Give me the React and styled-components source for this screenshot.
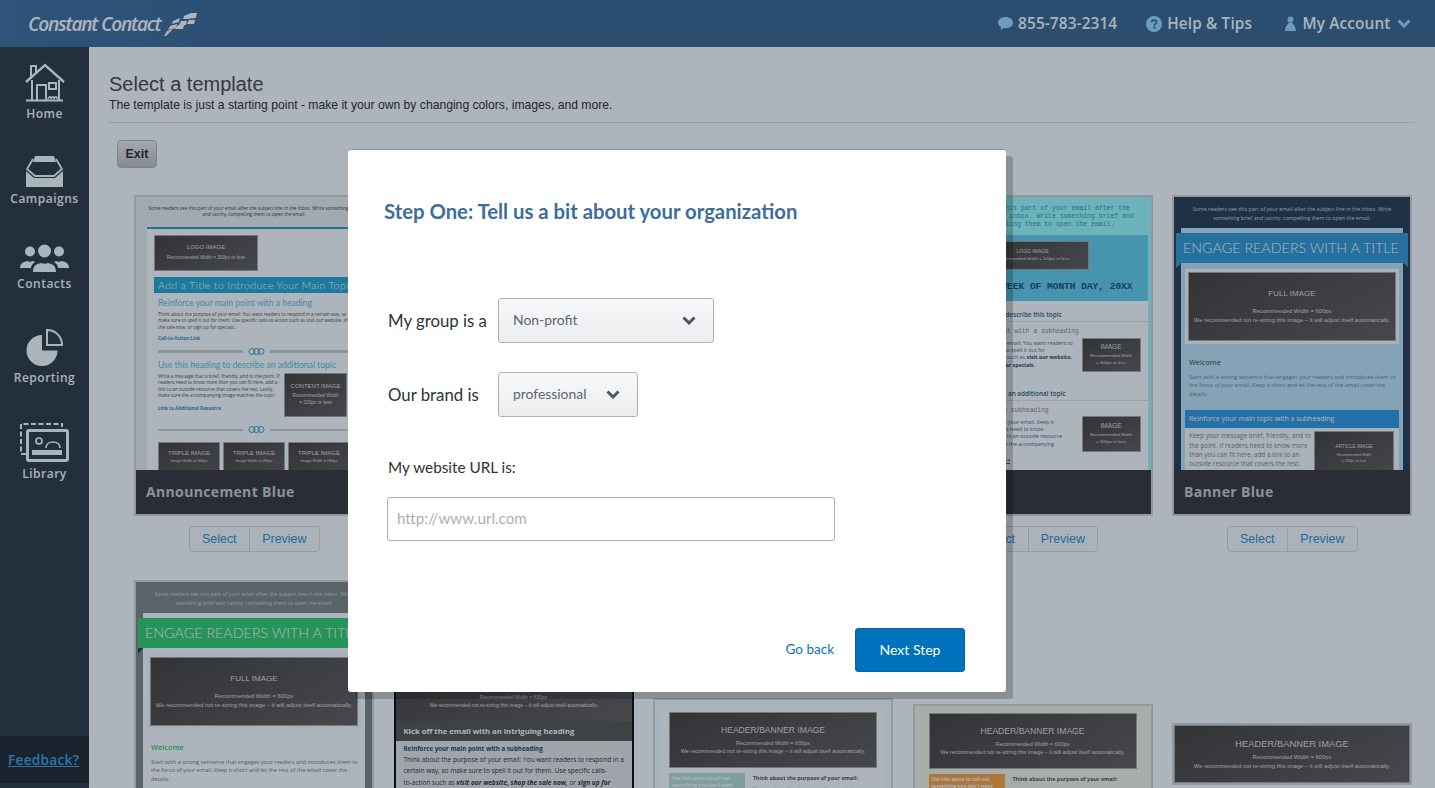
import React from 'react';
import styled, { createGlobalStyle } from 'styled-components';

/* The colours below are read from the dimmed picture; dim() returns the colour that, under the modal's backdrop, gives that reading. */
const dim = (hex) => {
  const n = parseInt(hex.slice(1), 16);
  const c = [(n >> 16) & 255, (n >> 8) & 255, n & 255];
  const back = [20, 40, 60];
  const v = c.map((x, i) => Math.max(0, Math.min(255, Math.round((x - back[i] * 0.35) / 0.65))));
  return `rgb(${v[0]},${v[1]},${v[2]})`;
};

const SANS = '"Open Sans", "Noto Sans", sans-serif';
const ARIAL = '"Liberation Sans", Arial, sans-serif';
const LATO = 'Lato, "Open Sans", sans-serif';
const MONO = '"Liberation Mono", monospace';

const Global = createGlobalStyle`
  html, body { margin: 0; padding: 0; height: 100%; overflow: hidden; background: #fff; }
  * { box-sizing: border-box; }
`;

const Page = styled.div`
  position: relative;
  width: 1435px;
  height: 788px;
  overflow: hidden;
  display: flex;
  flex-direction: column;
  font-family: ${ARIAL};
`;

const Header = styled.header`
  flex: 0 0 47px;
  display: flex;
  align-items: center;
  justify-content: space-between;
  padding: 0 24px 0 28px;
  background: linear-gradient(90deg, ${dim('#2f5379')}, ${dim('#2b4d70')} 30%);
`;
const Logo = styled.div`
  display: flex;
  align-items: center;
  gap: 2px;
  color: ${dim('#b4bdc4')};
  font: italic 600 19.2px/1 ${SANS};
  letter-spacing: -1.25px;
`;
const TopLinks = styled.nav`
  display: flex;
  align-items: center;
`;
const TopLink = styled.a`
  display: flex;
  align-items: center;
  gap: ${(p) => p.$gap}px;
  margin-left: ${(p) => p.$left}px;
  color: ${dim('#aab8c4')};
  font: 600 15.3px/1 ${SANS};
  letter-spacing: 0.15px;
`;

const Body = styled.div`
  flex: 1;
  display: flex;
  min-height: 0;
`;
const Side = styled.aside`
  flex: 0 0 89px;
  display: flex;
  flex-direction: column;
  background: ${dim('#24303c')};
`;
const NavItem = styled.a`
  height: ${(p) => p.$h}px;
  display: flex;
  flex-direction: column;
  align-items: center;
  justify-content: flex-end;
  gap: 5px;
  color: ${dim('#a7b1ba')};
  font: 600 12px/14px ${SANS};
  letter-spacing: 0.5px;
`;
const Feedback = styled.div`
  margin-top: auto;
  margin-bottom: 5px;
  height: 47px;
  display: flex;
  align-items: center;
  padding-left: 8px;
  background: ${dim('#19242f')};
  a {
    color: ${dim('#2a77ad')};
    font: 600 13.6px/1 ${SANS};
    letter-spacing: 0.3px;
    text-decoration: underline;
  }
`;

const Main = styled.main`
  flex: 1;
  min-width: 0;
  padding: 25px 20px 0;
  background: ${dim('#adb4bb')};
`;
const Title = styled.h1`
  margin: 0;
  font: 400 20px/24px ${ARIAL};
  color: ${dim('#37393c')};
`;
const Sub = styled.p`
  margin: 1px 0 0;
  font: 400 12.17px/16px ${ARIAL};
  color: ${dim('#24272a')};
`;
const Rule = styled.hr`
  margin: 9px 0 0;
  border: 0;
  border-top: 1px solid ${dim('#999ea3')};
`;
const ExitBtn = styled.button`
  display: block;
  margin: 17px 0 0 8px;
  width: 40px;
  height: 28px;
  padding: 0;
  border: 1px solid ${dim('#7f848a')};
  border-radius: 4px;
  background: linear-gradient(${dim('#a3a8ae')}, ${dim('#868b91')});
  color: ${dim('#24272a')};
  font: 700 12.5px/1 ${ARIAL};
`;
const Gallery = styled.div`
  display: flex;
  gap: 19.5px;
  margin: 27px 0 0 25px;
`;
const Column = styled.div`
  flex: 0 0 240px;
  width: 240px;
`;
const Card = styled.article`
  border: 2px solid ${(p) => p.$border || dim('#94999e')};
  margin-top: ${(p) => p.$top || 0}px;
  display: flex;
  flex-direction: column;
  height: ${(p) => (p.$tall ? 'auto' : '321px')};
`;
const Preview = styled.div`
  flex: 1;
  min-height: 0;
  overflow: hidden;
  background: ${(p) => p.$bg};
`;
const Caption = styled.div`
  flex: 0 0 44px;
  display: flex;
  align-items: center;
  padding-left: 10px;
  background: ${dim('#2a2e36')};
  color: ${dim('#8d9299')};
  font: 700 14px/1 ${SANS};
  letter-spacing: 0.35px;
`;
const BtnGroup = styled.div`
  display: flex;
  width: 131px;
  height: 26px;
  margin: 10px auto 0;
  border: 1px solid ${dim('#949ca3')};
  border-radius: 4px;
  background: ${dim('#abb2b9')};
`;
const GroupBtn = styled.a`
  flex: ${(p) => p.$w} 0 0;
  display: flex;
  align-items: center;
  justify-content: center;
  color: ${dim('#1f6b9f')};
  font: 400 12.4px/1 ${ARIAL};
  & + & { border-left: 1px solid ${dim('#949ca3')}; }
`;

/* image placeholders used inside the template previews */
const Shot = styled.div`
  flex: 0 0 auto;
  width: ${(p) => (p.$w ? `${p.$w}px` : 'auto')};
  height: ${(p) => p.$h}px;
  display: flex;
  flex-direction: column;
  align-items: center;
  justify-content: ${(p) => p.$justify || 'center'};
  padding: ${(p) => p.$pt || 0}px 0 ${(p) => p.$pb || 0}px;
  text-align: center;
  background: linear-gradient(150deg, ${dim('#333436')}, ${dim('#46484c')});
  outline: ${(p) => (p.$plain ? '0' : `1px solid ${dim('#74787d')}`)};
  outline-offset: -1px;
  color: ${dim('#9a9fa4')};
  font-family: ${ARIAL};
`;
const ShotTitle = styled.div`
  font-size: ${(p) => p.$s}px;
  line-height: 1.2;
  margin-bottom: ${(p) => p.$mb || 0}px;
  white-space: nowrap;
`;
const ShotNote = styled.div`
  font-size: ${(p) => p.$s}px;
  line-height: ${(p) => p.$lh || 1.5};
  white-space: nowrap;
`;

const Pre = styled.div`
  padding-top: 8px;
  text-align: center;
  color: ${(p) => p.$c};
  font: 400 ${(p) => p.$s}px/${(p) => p.$lh}px ${SANS};
  white-space: nowrap;
`;

/* Announcement */
const AnnPanel = styled.div`
  margin: 9px 0 0 11px;
  width: 214px;
  border-top: 2px solid ${dim('#1f7396')};
  padding: 6px 7px;
  background: ${dim('#adb4bb')};
`;
const AnnTitle = styled.div`
  margin-top: 6px;
  height: 16px;
  overflow: hidden;
  background: ${dim('#1c7a9e')};
  color: ${dim('#b5c4cf')};
  font: 300 10.6px/16px ${LATO};
  letter-spacing: 0.33px;
  padding-left: 4px;
  white-space: nowrap;
`;
const AnnHeading = styled.div`
  margin: ${(p) => p.$mt}px 0 0 4px;
  color: ${dim('#3d8aa8')};
  font: 400 8.6px/12px ${LATO};
  white-space: nowrap;
`;
const AnnText = styled.p`
  margin: ${(p) => p.$mt}px 0 0 4px;
  color: ${dim('#3a3f44')};
  font: 400 4.6px/6.5px ${SANS};
  white-space: nowrap;
`;
const AnnLink = styled.a`
  display: block;
  margin: ${(p) => p.$mt}px 0 0 4px;
  color: ${dim('#1f6b8f')};
  font: 700 4.6px/6.5px ${SANS};
`;
const Divider = styled.div`
  margin: ${(p) => p.$mt}px 0 0 4px;
  height: 6px;
  display: flex;
  align-items: center;
  gap: 5px;
  &::before, &::after {
    content: '';
    flex: 1;
    height: ${(p) => p.$bar}px;
    background: ${dim('#8f9499')};
  }
`;
const AnnRow = styled.div`
  display: flex;
  justify-content: space-between;
  margin-top: 2px;
  margin-right: 7px;
  height: 46px;
`;
const Triple = styled.div`
  display: flex;
  gap: 3px;
  margin: 9px 0 0 4px;
`;

/* Banner (ribbon) */
const RibbonPanel = styled.div`
  margin: 6px 7px 0;
  padding-top: 5px;
  min-height: 260px;
  background: ${(p) => p.$bg};
`;
const Ribbon = styled.div`
  position: relative;
  margin: 0 -5px;
  height: 30px;
  padding-left: 7px;
  overflow: visible;
  background: ${(p) => p.$c};
  color: ${dim('#b4c6d3')};
  font: 300 14.3px/30px ${LATO};
  white-space: nowrap;
  &::before, &::after {
    content: '';
    position: absolute;
    top: 100%;
    width: 5px;
    height: 5px;
    background: linear-gradient(to top right, transparent 50%, ${(p) => p.$fold} 50%);
  }
  &::before { left: 0; transform: scaleX(-1) ; }
  &::after { right: 0; }
`;
const Frame = styled.div`
  margin: 6px 4px 0;
  border: 3px solid ${dim('#a9b1b9')};
  display: flex;
  flex-direction: column;
`;
const Welcome = styled.div`
  margin: 13px 0 0 8px;
  color: ${(p) => p.$c};
  font: ${(p) => (p.$bold ? 600 : 400)} 7.4px/10px ${SANS};
`;
const RibbonText = styled.p`
  margin: 6px 0 0 8px;
  color: ${(p) => p.$c};
  font: 400 5.64px/8.2px ${SANS};
  white-space: nowrap;
`;
const SubBar = styled.div`
  margin: 12.4px 4px 0;
  height: 18px;
  padding-left: 4px;
  background: ${dim('#2470a8')};
  color: ${dim('#aac3d4')};
  font: 400 7px/18px ${SANS};
  white-space: nowrap;
`;
const LowerBox = styled.div`
  margin: 0 4px;
  padding: 3px 5px 0 4px;
  height: 60px;
  display: flex;
  justify-content: space-between;
  background: ${dim('#a9b2bb')};
`;
const LowerText = styled.p`
  margin: 0;
  color: ${dim('#595f66')};
  font: 400 6.4px/9.4px ${SANS};
  white-space: nowrap;
`;

/* Week of — mono newsletter */
const WeekPre = styled.div`
  padding-top: 8px;
  text-align: center;
  color: ${dim('#2c6f80')};
  font: 400 6.5px/8px ${MONO};
  white-space: nowrap;
`;
const WeekInner = styled.div`
  margin: 6px 3px 0;
  height: 240px;
  background: ${dim('#adb4bb')};
`;
const WeekHead = styled.div`
  height: 66px;
  padding-top: 6px;
  background: ${dim('#4794ad')};
  display: flex;
  flex-direction: column;
  align-items: center;
`;
const WeekDate = styled.div`
  align-self: flex-end;
  margin: 11px 15px 0 0;
  color: ${dim('#153f5c')};
  font: 700 9.5px/12px ${MONO};
  white-space: nowrap;
`;
const WeekSection = styled.section`
  padding: ${(p) => p.$pt}px 7px 0 8px;
`;
const WeekHeading = styled.div`
  margin: 0 -7px 0 -8px;
  padding: 0 0 2px 27px;
  border-bottom: 1px solid ${dim('#9ba2a9')};
  color: ${dim('#1f4a63')};
  font: 600 6.4px/9px ${SANS};
  white-space: nowrap;
`;
const WeekSub = styled.div`
  margin: 6px 0 0 21px;
  color: ${dim('#5f666d')};
  font: 400 6.3px/8px ${MONO};
  white-space: nowrap;
`;
const WeekRow = styled.div`
  display: flex;
  justify-content: space-between;
  margin-top: ${(p) => p.$mt}px;
  height: ${(p) => p.$h}px;
`;
const WeekText = styled.p`
  margin: ${(p) => p.$mt}px 0 0;
  color: ${dim('#33506a')};
  font: 400 5.3px/7.2px ${SANS};
  white-space: nowrap;
  b { font-weight: 700; color: ${dim('#1b3a52')}; }
`;
const WeekLink = styled.a`
  display: block;
  margin-top: 5px;
  color: ${dim('#33506a')};
  font: 400 5.3px/7.2px ${SANS};
  text-decoration: underline;
  white-space: nowrap;
`;

/* Header-banner layouts on the second row */
const HeadPanel = styled.div`
  margin: ${(p) => p.$mt}px ${(p) => p.$mx}px 0;
  padding: ${(p) => p.$pt}px 8px 0;
  background: ${(p) => p.$bg};
  min-height: 100px;
`;
const HeadCols = styled.div`
  display: flex;
  gap: 8px;
  margin-top: 5px;
`;
const CallOut = styled.div`
  flex: 0 0 76px;
  height: 40px;
  padding: 2px 3px;
  background: ${(p) => p.$bg};
  color: ${dim('#c3cbd0')};
  font: 700 4.7px/6.5px ${SANS};
`;
const HeadCopy = styled.div`
  color: ${dim('#595f66')};
  font: 400 5.4px/11px ${SANS};
  white-space: nowrap;
  b { color: ${dim('#3b4046')}; font-weight: 700; }
`;

/* Dark mobile-style template */
const DarkBand = styled.div`
  height: 20px;
  padding-left: 8px;
  background: ${dim('#3f4245')};
  color: ${dim('#b6babf')};
  font: 700 7.7px/20px ${SANS};
  white-space: nowrap;
`;
const DarkBody = styled.div`
  padding: 2px 4px 0 8px;
  height: 70px;
  background: ${dim('#9fa5ab')};
  color: ${dim('#25282b')};
  font: 400 6.5px/11.3px ${SANS};
  white-space: nowrap;
  h4 { margin: 0; font: 700 6.2px/11px ${SANS}; color: ${dim('#14365c')}; }
  p { margin: 0; }
`;

/* Overlay + dialog */
const Backdrop = styled.div`
  position: absolute;
  inset: 0;
  background: rgba(20, 40, 60, 0.35);
`;
const Dialog = styled.section`
  position: absolute;
  left: 348px;
  top: 149px;
  width: 658px;
  height: 543px;
  display: flex;
  flex-direction: column;
  padding: 49px 41px 20px 36px;
  background: #fff;
  border-top: 1px solid #8b97a3;
  border-radius: 3px;
  box-shadow: 7px 7px 0 rgba(0, 0, 0, 0.2);
  font-family: ${LATO};
`;
const DialogTitle = styled.h2`
  margin: 0;
  color: #3d6d9b;
  font: 700 20.3px/24px ${LATO};
`;
const Field = styled.div`
  display: flex;
  align-items: center;
  margin: ${(p) => p.$mt}px 0 0 4px;
`;
const FieldLabel = styled.label`
  width: 110px;
  color: #2e3338;
  font: 400 16.8px/20px ${LATO};
`;
const Select = styled.div`
  width: ${(p) => p.$w}px;
  height: 45px;
  display: flex;
  align-items: center;
  justify-content: space-between;
  padding: 0 17px 1px 14px;
  border: 1px solid #adb1b5;
  border-radius: 3px;
  background: linear-gradient(#f7f8f9, #ebedef);
  color: #5d656d;
  font: 400 13.9px/1 ${LATO};
`;
const UrlLabel = styled.label`
  display: block;
  margin: 40px 0 0 4px;
  color: #2e3338;
  font: 400 15.3px/20px ${LATO};
`;
const UrlInput = styled.div`
  margin: 20px 0 0 3px;
  width: 448px;
  height: 44px;
  display: flex;
  align-items: center;
  padding-left: 9px;
  border: 1px solid #adb1b5;
  border-radius: 3px;
  color: #adb0b3;
  font: 400 15.2px/1 ${LATO};
`;
const DialogFoot = styled.footer`
  margin-top: auto;
  display: flex;
  align-items: center;
  justify-content: flex-end;
  gap: 21px;
`;
const GoBack = styled.a`
  color: #0b72bb;
  font: 400 13.5px/1 ${LATO};
`;
const NextBtn = styled.button`
  width: 110px;
  height: 44px;
  padding: 0;
  border: 1px solid #0865a8;
  border-radius: 3px;
  background: #0071bc;
  color: #fff;
  font: 400 14px/1 ${LATO};
`;

const iconC = dim('#a9b9c8');
const topC = dim('#6d9cb8');

const LogoMark = () => (
  <svg width="35" height="24" viewBox="0 0 35 24" fill={dim('#b4bdc4')}>
    <path d="M22 4l7-3h6l-1 5-9 1h-4zM11 9l7-3-1 4-7 2zM19 9h6l-1 4h-7zM27 8h6l-1 4h-7zM8 14l7-2-1 4-8 2zM16 13h6l-1 4-8 0zM5 19l6-2-7 7 -2 0z" />
  </svg>
);
const HomeIcon = () => (
  <svg width="40" height="39" viewBox="0 0 40 39" fill="none" stroke={iconC} strokeWidth="2">
    <path d="M1 19L20 2l19 17" strokeWidth="2.4" />
    <path d="M6 15v-12h5v7" />
    <path d="M7 17v20M34 17v20M1 37.5h37" />
    <path d="M12 37V22h9v15" />
    <rect x="24" y="20" width="7" height="6" />
    <path d="M23 36c1-3 3-3 3 0 1-3 3-3 3 0 1-3 3-3 3 0" strokeWidth="1.6" />
  </svg>
);
const TrayIcon = () => (
  <svg width="37" height="31" viewBox="0 0 37 31" fill={iconC} stroke="none">
    <path d="M9 0h19l2 6H7z" />
    <path d="M7 3L1 13l8 7h19l8-7L30 3" fill="none" stroke={iconC} strokeWidth="1.8" />
    <path d="M0 15l8 7h21l8-7v16H0z" />
  </svg>
);
const PeopleIcon = () => (
  <svg width="49" height="28" viewBox="0 0 49 28" fill={iconC}>
    <circle cx="10" cy="7.5" r="5" />
    <path d="M0 24c0-5 4-6 7-7 2 1 4 1 6 0l2 1c-3 2-4 4-4 6z" />
    <circle cx="39" cy="7.5" r="5" />
    <path d="M49 24c0-5-4-6-7-7-2 1-4 1-6 0l-2 1c3 2 4 4 4 6z" />
    <circle cx="24.5" cy="7" r="6.5" />
    <path d="M13 28c0-7 4-8 8-9 2 1 5 1 7 0 4 1 8 2 8 9z" />
  </svg>
);
const PieIcon = () => (
  <svg width="37" height="37" viewBox="0 0 37 37">
    <path d="M16 6a15.5 15.5 0 1 0 15.5 15.5H16z" fill={iconC} />
    <path d="M21 1c8 0 15 6 15 15H21z" fill="none" stroke={iconC} strokeWidth="2" />
  </svg>
);
const LibraryIcon = () => (
  <svg width="49" height="39" viewBox="0 0 49 39" fill="none" stroke={iconC}>
    <path d="M6 31H1V1h41v3" strokeWidth="2" strokeDasharray="5 2.5" />
    <rect x="7.5" y="7.5" width="40" height="30" rx="1.5" strokeWidth="3" />
    <circle cx="19" cy="18" r="3" strokeWidth="1.7" />
    <path d="M26 25c0-8 14-8 14 0" strokeWidth="1.7" />
    <rect x="12" y="27" width="30" height="5" fill={iconC} stroke="none" />
  </svg>
);
const ChatIcon = () => (
  <svg width="15" height="15" viewBox="0 0 15 15" fill={topC}>
    <path d="M7.5 1C11.5 1 15 3.400 15 6.700s-3.500 5.600-7.500 5.600c-.7 0-1.300 0-1.900-.2L2.700 14.500l.4-3.400C1.200 10 0 8.500 0 6.700 0 3.400 3.500 1 7.500 1z" />
  </svg>
);
const HelpIcon = () => (
  <svg width="16" height="16" viewBox="0 0 16 16">
    <circle cx="8" cy="8" r="8" fill={topC} />
    <path d="M5.700 6.200C5.800 4.800 6.800 4 8.100 4c1.400 0 2.400.8 2.400 2 0 1.800-2.100 1.800-2.100 3.400" fill="none" stroke={dim('#2b4d70')} strokeWidth="1.700" />
    <rect x="7.400" y="10.500" width="2" height="2" fill={dim('#2b4d70')} />
  </svg>
);
const UserIcon = () => (
  <svg width="11" height="15" viewBox="0 0 11 15" fill={topC}>
    <circle cx="5.500" cy="3.500" r="3" />
    <path d="M3.700 6.500h3.600c.2 2 3.700 3 3.700 8.500H0c0-5.500 3.500-6.500 3.700-8.500z" />
  </svg>
);
const Chevron = ({ w = 14, h = 9, c, sw = 3 }) => (
  <svg width={w} height={h} viewBox="0 0 14 9" fill="none" stroke={c} strokeWidth={sw}>
    <path d="M1.500 1.500L7 7l5.500-5.500" />
  </svg>
);
const Rings = ({ w = 17, h = 7 }) => (
  <svg width={w} height={h} viewBox="0 0 17 7" fill="none" stroke={dim('#1f6b8f')} strokeWidth="0.9">
    <circle cx="4" cy="3.500" r="3" />
    <circle cx="8.500" cy="3.500" r="3" />
    <circle cx="13" cy="3.500" r="3" />
  </svg>
);

const PRE_A = 'Some readers see this part of your email after the subject line in the inbox. Write something brief';
const Buttons = () => (
  <BtnGroup>
    <GroupBtn $w={61}>Select</GroupBtn>
    <GroupBtn $w={70}>Preview</GroupBtn>
  </BtnGroup>
);

const Announcement = () => (
  <Preview $bg={dim('#a2a9af')}>
    <Pre $c={dim('#30353a')} $lh={6.4} $s={4.7}>
      {PRE_A}
      <br />
      and catchy, compelling them to open the email.
    </Pre>
    <AnnPanel>
      <Shot $w={104} $h={36}>
        <ShotTitle $s={6} $mb={3}>LOGO IMAGE</ShotTitle>
        <ShotNote $s={4.7}>Recommended Width = 300px or less</ShotNote>
      </Shot>
      <AnnTitle>Add a Title to Introduce Your Main Topic</AnnTitle>
      <AnnHeading $mt={4}>Reinforce your main point with a heading</AnnHeading>
      <AnnText $mt={2}>
        Think about the purpose of your email: You want readers to respond in a certain way, so
        <br />
        make sure to spell it out for them. Use specific calls-to-action such as visit our website, shop
        <br />
        the sale now, or sign up for specials.
      </AnnText>
      <AnnLink $mt={5}>Call-to-Action Link</AnnLink>
      <Divider $mt={7} $bar={3}><Rings /></Divider>
      <AnnHeading $mt={4}>Use this heading to describe an additional topic</AnnHeading>
      <AnnRow>
        <div>
          <AnnText $mt={0}>
            Write a message that is brief, friendly, and to the point. If
            <br />
            readers need to know more than you can fit here, add a
            <br />
            link to an outside resource that covers the rest. Lastly,
            <br />
            make sure the accompanying image matches the topic.
          </AnnText>
          <AnnLink $mt={6}>Link to Additional Resource</AnnLink>
        </div>
        <Shot $w={63} $h={44}>
          <ShotTitle $s={6} $mb={3}>CONTENT IMAGE</ShotTitle>
          <ShotNote $s={4.8} $lh={1.45}>Recommended Width<br />= 320px or less</ShotNote>
        </Shot>
      </AnnRow>
      <Divider $mt={8} $bar={2}><Rings /></Divider>
      <Triple>
        {[0, 1, 2].map((i) => (
          <Shot key={i} $w={62} $h={40} $justify="flex-start" $pt={8}>
            <ShotTitle $s={6} $mb={1}>TRIPLE IMAGE</ShotTitle>
            <ShotNote $s={3.9}>Image Width = 180px</ShotNote>
          </Shot>
        ))}
      </Triple>
    </AnnPanel>
  </Preview>
);

const Week = () => (
  <Preview $bg={dim('#6cb3bf')}>
    <WeekPre>
      Some readers see this part of your email after the
      <br />
      subject line in the inbox. Write something brief and
      <br />
      catchy, compelling them to open the email.
    </WeekPre>
    <WeekInner>
      <WeekHead>
        <Shot $w={112} $h={29}>
          <ShotTitle $s={5} $mb={2}>LOGO IMAGE</ShotTitle>
          <ShotNote $s={4.4}>Recommended Width = 320px or less</ShotNote>
        </Shot>
        <WeekDate>WEEK OF MONTH DAY, 20XX</WeekDate>
      </WeekHead>
      <WeekSection $pt={9}>
        <WeekHeading>Use this heading to describe this topic</WeekHeading>
        <WeekSub>Start the content with a subheading</WeekSub>
        <WeekRow $mt={2} $h={34}>
          <WeekText $mt={2}>
            Think about the purpose of your email: You want readers to
            <br />
            respond in a way, so make sure to spell it out for
            <br />
            them. Use specific calls to action such as <b>visit our website,</b>
            <br />
            <b>shop the sale now, or sign up for specials.</b>
          </WeekText>
          <Shot $w={59} $h={34}>
            <ShotTitle $s={6.5} $mb={2}>IMAGE</ShotTitle>
            <ShotNote $s={4.4}>Recommended Width<br />= 300px or less</ShotNote>
          </Shot>
        </WeekRow>
      </WeekSection>
      <WeekSection $pt={17}>
        <WeekHeading>Use this heading for an additional topic</WeekHeading>
        <WeekSub>Follow up with a subheading</WeekSub>
        <WeekRow $mt={1} $h={36}>
          <WeekText $mt={3}>
            Use this section to share more in your email. Keep it
            <br />
            short and friendly. If your readers need to know
            <br />
            more than you can fit, add a link to an outside resource
            <br />
            covers the rest. Lastly, make sure the accompanying
          </WeekText>
          <Shot $w={59} $h={36}>
            <ShotTitle $s={6.5} $mb={2}>IMAGE</ShotTitle>
            <ShotNote $s={4.4}>Recommended Width<br />= 300px or less</ShotNote>
          </Shot>
        </WeekRow>
        <WeekLink>Call-to-Action Link to the Resource</WeekLink>
      </WeekSection>
    </WeekInner>
  </Preview>
);

const RibbonPreview = ({ bg, preC, panel, ribbon, fold, welcomeC, textC, boldWelcome, children }) => (
  <Preview $bg={bg}>
    <Pre $c={preC} $lh={8.6} $s={5.3}>
      Some readers see this part of your email after the subject line in the inbox. Write
      <br />
      something brief and catchy, compelling them to open the email.
    </Pre>
    <RibbonPanel $bg={panel}>
      <Ribbon $c={ribbon} $fold={fold}>ENGAGE READERS WITH A TITLE</Ribbon>
      <Frame>
        <Shot $h={69}>
          <ShotTitle $s={8} $mb={9}>FULL IMAGE</ShotTitle>
          <ShotNote $s={5.85}>
            Recommended Width = 600px
            <br />
            We recommended not re-sizing this image – it will adjust itself automatically.
          </ShotNote>
        </Shot>
      </Frame>
      <Welcome $c={welcomeC} $bold={boldWelcome}>Welcome</Welcome>
      <RibbonText $c={textC}>
        Start with a strong sentence that engages your readers and introduces them to
        <br />
        the focus of your email. Keep it short and let the rest of the email cover the
        <br />
        details.
      </RibbonText>
      {children}
    </RibbonPanel>
  </Preview>
);

const HeaderShot = ({ h, note, title, gap }) => (
  <Shot $h={h}>
    <ShotTitle $s={title} $mb={gap}>HEADER/BANNER IMAGE</ShotTitle>
    <ShotNote $s={note}>
      Recommended Width = 600px
      <br />
      We recommended not re-sizing this image – it will adjust itself automatically.
    </ShotNote>
  </Shot>
);

const HeaderPreview = ({ bg, panel, mt, callout }) => (
  <Preview $bg={bg}>
    <HeadPanel $mt={mt} $mx={6} $pt={5} $bg={panel}>
      <HeaderShot h={56} note={5.5} title={8.6} gap={4} />
      <HeadCols>
        <CallOut $bg={callout}>Use this space to call out something you don't want</CallOut>
        <HeadCopy>
          <b>Think about the purpose of your email:</b>
          <br />
          You want readers to respond in a certain
        </HeadCopy>
      </HeadCols>
    </HeadPanel>
  </Preview>
);

const App = () => (
  <Page>
    <Global />
    <Header>
      <Logo>
        Constant Contact
        <LogoMark />
      </Logo>
      <TopLinks>
        <TopLink $gap={5} $left={0}><ChatIcon />855-783-2314</TopLink>
        <TopLink $gap={5} $left={29}><HelpIcon />Help &amp; Tips</TopLink>
        <TopLink $gap={6.5} $left={33}><UserIcon />My Account<Chevron c={topC} /></TopLink>
      </TopLinks>
    </Header>
    <Body>
      <Side>
        <NavItem $h={74}><HomeIcon />Home</NavItem>
        <NavItem $h={85}><TrayIcon />Campaigns</NavItem>
        <NavItem $h={85}><PeopleIcon />Contacts</NavItem>
        <NavItem $h={94}><PieIcon />Reporting</NavItem>
        <NavItem $h={96}><LibraryIcon />Library</NavItem>
        <Feedback><a>Feedback?</a></Feedback>
      </Side>
      <Main>
        <Title>Select a template</Title>
        <Sub>The template is just a starting point - make it your own by changing colors, images, and more.</Sub>
        <Rule />
        <ExitBtn>Exit</ExitBtn>
        <Gallery>
          <Column>
            <Card>
              <Announcement />
              <Caption>Announcement Blue</Caption>
            </Card>
            <Buttons />
            <Card $top={28} $tall>
              <RibbonPreview
                bg={dim('#586468')}
                preC={dim('#949a9e')}
                panel={dim('#adb4bb')}
                ribbon={dim('#279458')}
                fold={dim('#2a2e36')}
                welcomeC={dim('#2a9058')}
                textC={dim('#555b61')}
                boldWelcome
              />
            </Card>
          </Column>
          <Column>
            <Card>
              <Preview $bg={dim('#adb4bb')} />
              <Caption />
            </Card>
            <Buttons />
            <Card $top={87} $tall $border="#000">
              <Preview $bg={dim('#3a3c3f')}>
                <Shot $h={80} $justify="flex-end" $pb={12} $plain>
                  <ShotNote $s={5}>
                    Recommended Width = 650px
                    <br />
                    We recommended not re-sizing this image – it will adjust itself automatically.
                  </ShotNote>
                </Shot>
                <DarkBand>Kick off the email with an intriguing heading</DarkBand>
                <DarkBody>
                  <h4>Reinforce your main point with a subheading</h4>
                  <p>
                    Think about the purpose of your email: You want readers to respond in a
                    <br />
                    certain way, so make sure to spell it out for them. Use specific calls-
                    <br />
                    to-action such as <b><i>visit our website, shop the sale now,</i></b> or <b><i>sign up for</i></b>
                    <br />
                    <b><i>specials.</i></b>
                  </p>
                </DarkBody>
              </Preview>
            </Card>
          </Column>
          <Column>
            <Card>
              <Preview $bg={dim('#adb4bb')} />
              <Caption />
            </Card>
            <Buttons />
            <Card $top={146} $tall>
              <HeaderPreview bg={dim('#a7bbbb')} panel={dim('#adb4bb')} mt={7} callout={dim('#7d9e9e')} />
            </Card>
          </Column>
          <Column>
            <Card>
              <Week />
              <Caption />
            </Card>
            <Buttons />
            <Card $top={152} $tall>
              <HeaderPreview bg={dim('#a7aeaa')} panel={dim('#a7aeaa')} mt={2} callout={dim('#b4773a')} />
            </Card>
          </Column>
          <Column>
            <Card>
              <RibbonPreview
                bg={dim('#1f3247')}
                preC={dim('#8f9ba6')}
                panel={dim('#85a3b6')}
                ribbon={dim('#25709f')}
                fold={dim('#25709f')}
                welcomeC={dim('#1f3040')}
                textC={dim('#4b6072')}
              >
                <SubBar>Reinforce your main topic with a subheading</SubBar>
                <LowerBox>
                  <LowerText>
                    Keep your message brief, friendly, and to
                    <br />
                    the point. If readers need to know more
                    <br />
                    than you can fit here, add a link to an
                    <br />
                    outside resource that covers the rest.
                  </LowerText>
                  <Shot $w={80} $h={46}>
                    <ShotTitle $s={4.8} $mb={3}>ARTICLE IMAGE</ShotTitle>
                    <ShotNote $s={3.6}>Recommended Width<br />= 230px or less</ShotNote>
                  </Shot>
                </LowerBox>
              </RibbonPreview>
              <Caption>Banner Blue</Caption>
            </Card>
            <Buttons />
            <Card $top={171} $tall>
              <Preview $bg={dim('#adb4bb')}>
                <HeaderShot h={58} note={5.85} title={9.4} gap={4} />
              </Preview>
            </Card>
          </Column>
        </Gallery>
      </Main>
    </Body>
    <Backdrop />
    <Dialog>
      <DialogTitle>Step One: Tell us a bit about your organization</DialogTitle>
      <Field $mt={75}>
        <FieldLabel>My group is a</FieldLabel>
        <Select $w={216}>
          Non-profit
          <Chevron c="#50585f" w={14} h={9} />
        </Select>
      </Field>
      <Field $mt={29}>
        <FieldLabel>Our brand is</FieldLabel>
        <Select $w={140}>
          professional
          <Chevron c="#50585f" w={14} h={9} />
        </Select>
      </Field>
      <UrlLabel>My website URL is:</UrlLabel>
      <UrlInput>http://www.url.com</UrlInput>
      <DialogFoot>
        <GoBack>Go back</GoBack>
        <NextBtn>Next Step</NextBtn>
      </DialogFoot>
    </Dialog>
  </Page>
);

export default App;
